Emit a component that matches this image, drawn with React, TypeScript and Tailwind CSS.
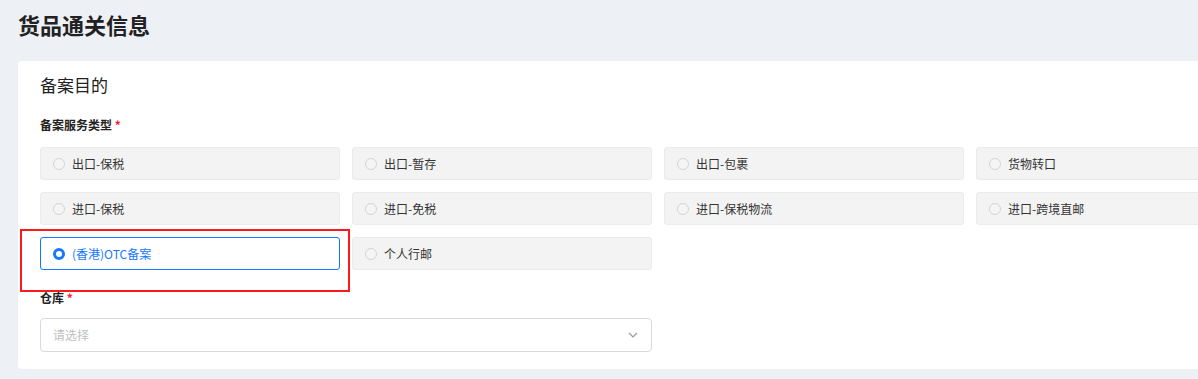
import React from 'react'

const options = [
  '出口-保税',
  '出口-暂存',
  '出口-包裹',
  '货物转口',
  '进口-保税',
  '进口-免税',
  '进口-保税物流',
  '进口-跨境直邮',
  '(香港)OTC备案',
  '个人行邮',
]

const selected = '(香港)OTC备案'

const App: React.FC = () => {
  return (
    <div
      className="w-[1198px] h-[379px] overflow-hidden bg-[#edf0f5] pl-[18px] pt-[9px]"
      style={{ fontFamily: '"Noto Sans CJK SC", "Noto Sans", sans-serif' }}
    >
      <h1 className="text-[22px] leading-[30px] font-bold text-[#222]">货品通关信息</h1>
      <div className="relative mt-[22px] w-[1220px] h-[308px] bg-white rounded-[4px] pl-[22px] pt-[12px]">
        <h2 className="text-[17px] leading-[24px] text-[#222]">备案目的</h2>
        <div className="mt-[20px] text-[12px] leading-[16px] font-bold text-[#222]">
          备案服务类型 <span className="text-[#f5222d]">*</span>
        </div>
        <div className="mt-[14px] grid grid-cols-[repeat(4,300px)] gap-x-[12px] gap-y-[12px]">
          {options.map((o) => {
            const active = o === selected
            return (
              <div
                key={o}
                className={
                  active
                    ? 'h-[33px] flex items-center gap-[7px] px-[12px] rounded-[3px] border border-[#1677ff] bg-white'
                    : 'h-[33px] flex items-center gap-[7px] px-[12px] rounded-[3px] border border-[#ebebeb] bg-[#f3f3f3]'
                }
              >
                {active ? (
                  <span className="w-[12px] h-[12px] rounded-full border-[3.5px] border-[#1677ff] bg-white" />
                ) : (
                  <span className="w-[12px] h-[12px] rounded-full border border-[#d4d4d4] bg-[#f5f5f5]" />
                )}
                <span className={active ? 'text-[12px] text-[#1677ff]' : 'text-[12px] text-[#333]'}>{o}</span>
              </div>
            )
          })}
        </div>
        <div className="mt-[20px] text-[12px] leading-[16px] font-bold text-[#222]">
          仓库 <span className="text-[#f5222d]">*</span>
        </div>
        <div className="mt-[12px] w-[612px] h-[34px] flex items-center justify-between px-[12px] border border-[#d9d9d9] rounded-[4px]">
          <span className="text-[12px] text-[#bfbfbf]">请选择</span>
          <svg width="12" height="12" viewBox="0 0 12 12" fill="none">
            <path d="M2 4 L6 8 L10 4" stroke="#999" strokeWidth="1.2" />
          </svg>
        </div>
        <div className="absolute left-[2px] top-[168px] w-[330px] h-[63px] border-2 border-[#ff1a1a]" />
      </div>
    </div>
  )
}

export default App
